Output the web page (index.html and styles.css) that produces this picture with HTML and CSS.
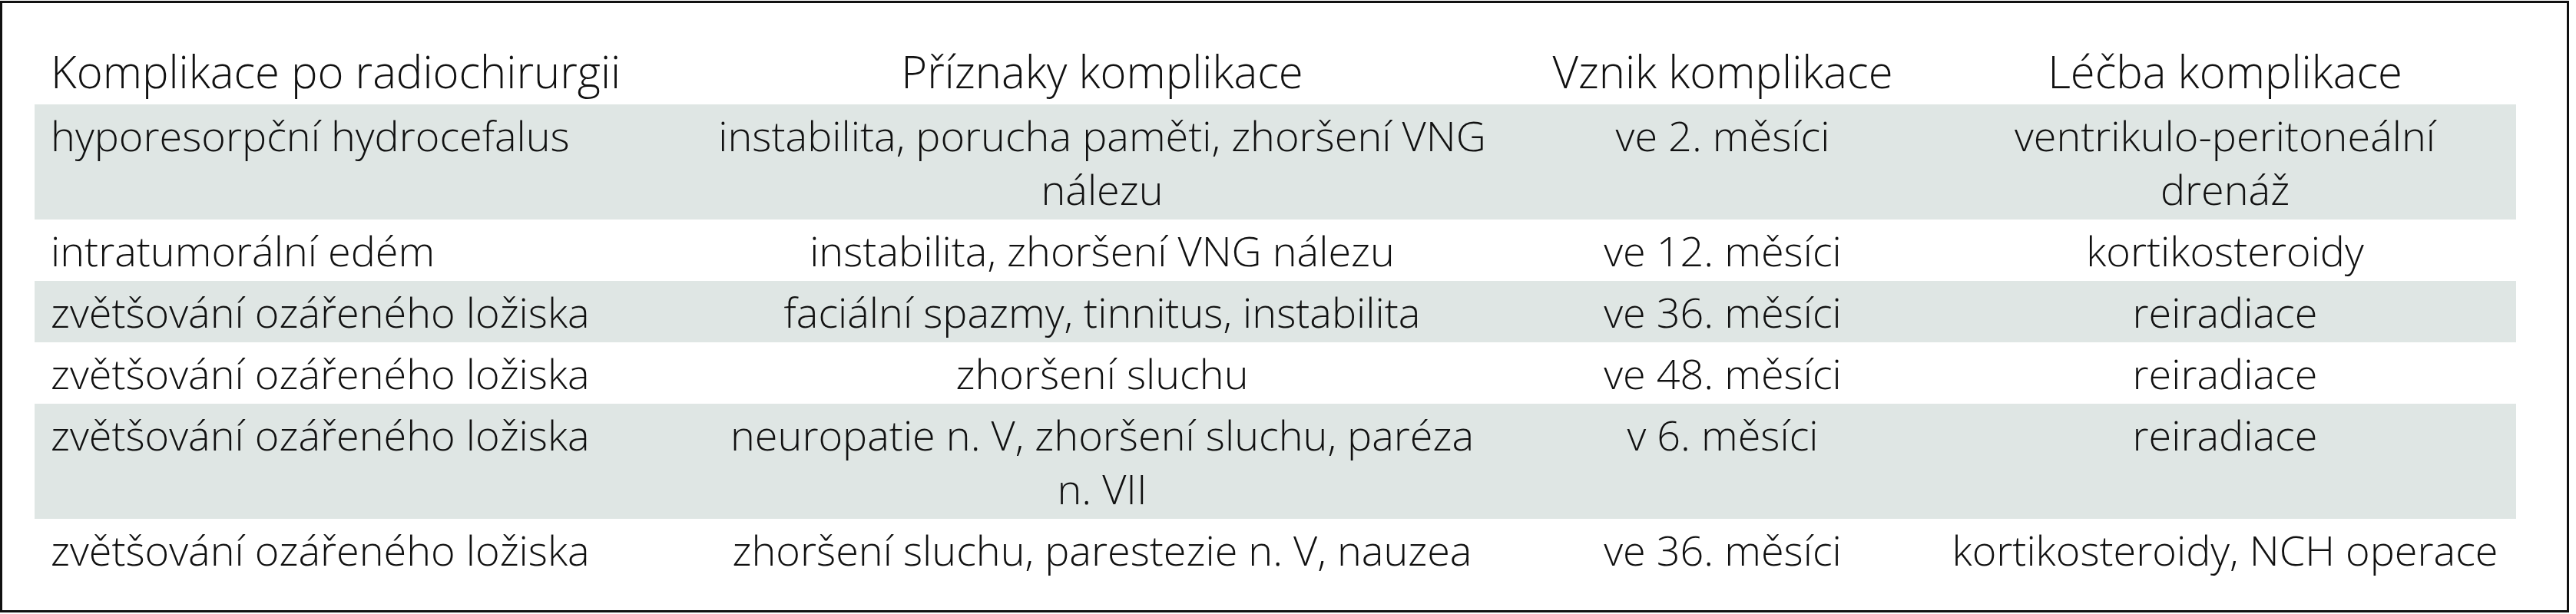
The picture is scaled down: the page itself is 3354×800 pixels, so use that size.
FILE: index.html
```html
<!DOCTYPE html>
<html lang="cs">
<head>
<meta charset="utf-8">
<title>Komplikace po radiochirurgii</title>
<link rel="stylesheet" href="styles.css">
</head>
<body>
<div class="box">
  <table class="tbl">
    <colgroup>
      <col class="c1"><col class="c2"><col class="c3"><col class="c4">
    </colgroup>
    <thead>
      <tr>
        <th class="left">Komplikace po radiochirurgii</th>
        <th>Příznaky komplikace</th>
        <th>Vznik komplikace</th>
        <th>Léčba komplikace</th>
      </tr>
    </thead>
    <tbody>
      <tr class="shade">
        <td class="left">hyporesorpční hydrocefalus</td>
        <td class="sym">instabilita, porucha paměti, zhoršení VNG nálezu</td>
        <td>ve 2. měsíci</td>
        <td class="trt">ventrikulo-peritoneální drenáž</td>
      </tr>
      <tr>
        <td class="left">intratumorální edém</td>
        <td class="sym">instabilita, zhoršení VNG nálezu</td>
        <td>ve 12. měsíci</td>
        <td class="trt">kortikosteroidy</td>
      </tr>
      <tr class="shade">
        <td class="left">zvětšování ozářeného ložiska</td>
        <td class="sym">faciální spazmy, tinnitus, instabilita</td>
        <td>ve 36. měsíci</td>
        <td class="trt">reiradiace</td>
      </tr>
      <tr>
        <td class="left">zvětšování ozářeného ložiska</td>
        <td class="sym">zhoršení sluchu</td>
        <td>ve 48. měsíci</td>
        <td class="trt">reiradiace</td>
      </tr>
      <tr class="shade">
        <td class="left">zvětšování ozářeného ložiska</td>
        <td class="sym">neuropatie n. V, zhoršení sluchu, paréza n. VII</td>
        <td>v 6. měsíci</td>
        <td class="trt">reiradiace</td>
      </tr>
      <tr>
        <td class="left">zvětšování ozářeného ložiska</td>
        <td class="sym">zhoršení sluchu, parestezie n. V, nauzea</td>
        <td>ve 36. měsíci</td>
        <td class="trt">kortikosteroidy, NCH operace</td>
      </tr>
    </tbody>
  </table>
</div>
</body>
</html>
```
FILE: styles.css
```css
html, body {
  margin: 0;
  padding: 0;
  background: #ffffff;
}
body {
  font-family: "Open Sans", "Noto Sans", "DejaVu Sans", sans-serif;
  font-weight: 300;
  color: #111111;
}
.box {
  box-sizing: border-box;
  margin-top: 1px;
  width: 3345px;
  height: 797px;
  border: 3px solid #111111;
  padding: 50px 66px 36px 42px;
}
.tbl {
  table-layout: fixed;
  width: 3231px;
  border-collapse: collapse;
  border-spacing: 0;
  font-size: 54px;
  line-height: 70px;
}
.c1 { width: 857px; }
.c2 { width: 1066px; }
.c3 { width: 550px; }
.c4 { width: 758px; }
.tbl th,
.tbl td {
  text-align: center;
  vertical-align: top;
  font-weight: 300;
  padding: 5px 20px 5px 20px;
}
.tbl th {
  font-size: 58px;
  padding-top: 4px;
  padding-bottom: 8px;
}
.tbl .sym {
  padding-left: 28px;
  padding-right: 28px;
}
.tbl .trt {
  padding-left: 16px;
  padding-right: 16px;
}
.tbl .left {
  text-align: left;
  padding-left: 21px;
}
.shade {
  background: #dfe6e4;
}
```
